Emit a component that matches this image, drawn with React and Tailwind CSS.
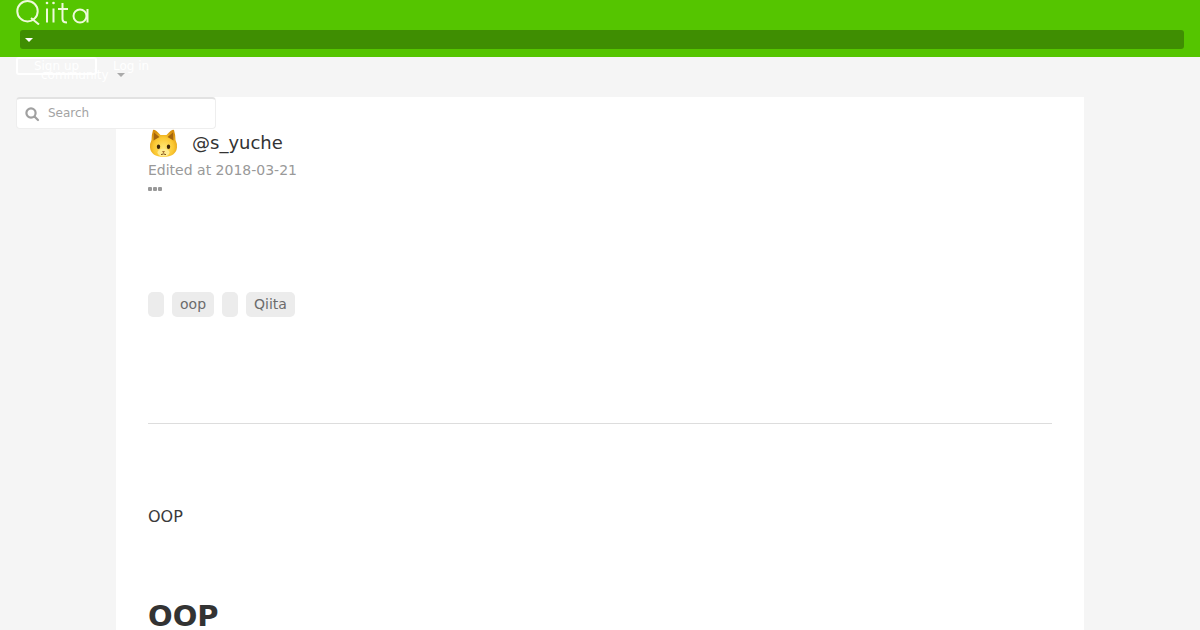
function Logo() {
  return (
    <svg width="76" height="25" viewBox="0 0 76 25" fill="none" stroke="#eefada" strokeWidth="2" className="block">
      <circle cx="11.5" cy="11.2" r="10.2" />
      <path d="M15 18 L23 24.5" />
      <path d="M31 8.5 V22.5" />
      <circle cx="31" cy="3" r="1.3" fill="#eefada" stroke="none" />
      <path d="M37.5 8.5 V22.5" />
      <circle cx="37.5" cy="3" r="1.3" fill="#eefada" stroke="none" />
      <path d="M46.5 3 V19 Q46.5 22.5 51 22.5 M42 9 H52" />
      <circle cx="64" cy="16" r="6.5" />
      <path d="M71.5 9 V22.5" />
    </svg>
  );
}

function CatFace() {
  return (
    <svg width="30" height="30" viewBox="0 0 30 30" className="block">
      <defs>
        <radialGradient id="catFill" cx="50%" cy="65%" r="62%">
          <stop offset="0%" stopColor="#ffe672" />
          <stop offset="60%" stopColor="#fbc832" />
          <stop offset="100%" stopColor="#d8900f" />
        </radialGradient>
      </defs>
      <path d="M5 1 Q7 0 12.5 6 H18.5 Q24 0 26 1 Q27.5 6 27.5 11 Q29.5 15 29 18.5 Q28 27.5 15.5 28 Q3 27.5 2 18.5 Q1.5 15 3.5 11 Q3.5 6 5 1 Z" fill="url(#catFill)" />
      <path d="M6 3.5 L11.5 8 L5.5 11.5 Z M25 3.5 L19.5 8 L25.5 11.5 Z" fill="#a4650f" />
      <ellipse cx="15.5" cy="23.5" rx="6" ry="4" fill="#ffeb8e" />
      <ellipse cx="10.5" cy="17.7" rx="1.7" ry="2.2" fill="#3d2508" />
      <ellipse cx="20.5" cy="17.7" rx="1.7" ry="2.2" fill="#3d2508" />
      <path d="M14 22.2 H17 L15.5 24 Z" fill="#8a4a12" />
      <path d="M13 25.6 Q15.5 24.2 18 25.6" stroke="#6b3a0c" strokeWidth="0.9" fill="none" />
    </svg>
  );
}

function Tag({ children }) {
  return (
    <span className="flex h-[25px] min-w-4 items-center rounded-[5px] bg-[#ececec] px-2 text-[14px] text-[#6b6b6b]">
      {children}
    </span>
  );
}

export default function App() {
  return (
    <div className="relative h-[630px] overflow-hidden bg-[#f5f5f5] font-['DejaVu_Sans',sans-serif] text-[#333333]">
      {/* header */}
      <header className="h-[57px] bg-[#55c500]">
        <div className="pl-4">
          <Logo />
        </div>
        <div className="ml-5 mr-4 mt-[5px] flex h-[19px] items-center rounded-[3px] bg-[#3f8e02] pl-[5px]">
          <span className="h-0 w-0 border-x-[4px] border-t-[4px] border-x-transparent border-t-white" />
        </div>
      </header>

      {/* header items that spill out of the bar */}
      <div className="absolute left-4 top-[57px] h-[18px] w-[81px] rounded-[3px] border-2 border-white text-center text-[12px] leading-[14px] text-white">
        Sign up
      </div>
      <span className="absolute left-[113px] top-[58px] text-[12px] leading-4 text-white">Log in</span>
      <span className="absolute left-[41px] top-[67px] text-[12px] leading-4 text-white">community</span>
      <span className="absolute left-[117px] top-[73px] h-0 w-0 border-x-[4px] border-t-[4px] border-x-transparent border-t-[#aaaaaa]" />

      {/* search */}
      <div className="absolute left-4 top-[97px] z-10 flex h-8 w-[200px] items-center rounded-[4px] border border-t-2 border-[#eeeeee] border-t-[#e2e2e2] bg-white pl-[7px]">
        <svg width="16" height="16" viewBox="0 0 16 16" fill="none" stroke="#a0a0a0" strokeWidth="2.2" className="block">
          <circle cx="7" cy="7" r="4.6" />
          <path d="M10.5 10.5 L14 14" strokeLinecap="round" />
        </svg>
        <span className="ml-2 -translate-y-px text-[12px] text-[#a3a3a3]">Search</span>
      </div>

      {/* article */}
      <main className="mx-auto mt-10 w-[968px] bg-white px-8 pt-8">
        <div className="flex h-[30px] items-center">
          <CatFace />
          <span className="ml-[14px] -translate-y-[2px] text-[18px] text-[#333333]">@s_yuche</span>
        </div>
        <p className="mt-[1px] text-[14px] leading-[21px] text-[#999999]">Edited at 2018-03-21</p>
        <div className="mt-[6px] flex gap-px">
          <span className="h-1 w-1 rounded-[1px] bg-[#999999]" />
          <span className="h-1 w-1 rounded-[1px] bg-[#999999]" />
          <span className="h-1 w-1 rounded-[1px] bg-[#999999]" />
        </div>

        <div className="mt-[101px] flex gap-2">
          <Tag />
          <Tag>oop</Tag>
          <Tag />
          <Tag>Qiita</Tag>
        </div>

        <hr className="mt-[106px] border-t border-[#dddddd]" />

        <p className="mt-[81px] text-[16px] leading-6 text-[#3a3a3a]">OOP</p>
        <h1 className="mt-[70px] text-[29px] font-bold leading-[34px]">OOP</h1>
      </main>
    </div>
  );
}
